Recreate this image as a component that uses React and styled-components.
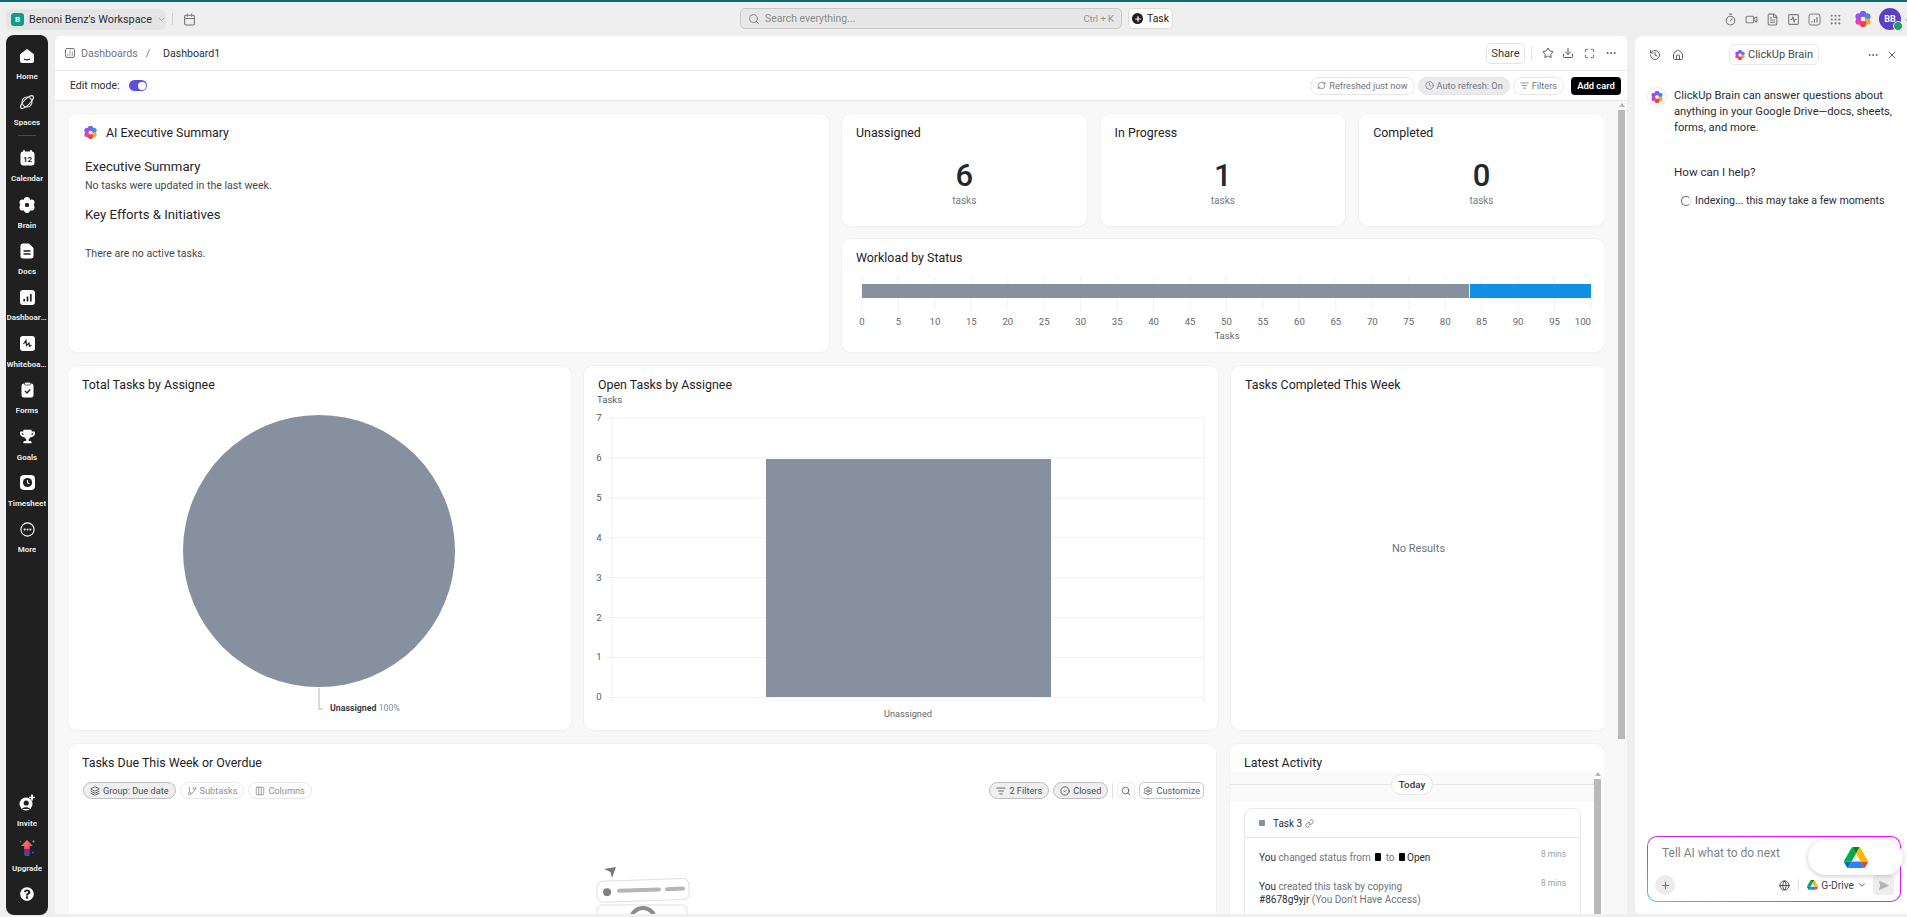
import React from 'react';
import styled, { createGlobalStyle } from 'styled-components';
import {
  Search, Calendar, ChevronDown, Timer, Video, FileText, Grip, Star, Download, Maximize, Ellipsis,
  RefreshCw, Clock, ListFilter, History, House, X, Plus, Globe, SendHorizontal, Layers, GitBranch,
  Columns3, CircleCheck, Settings, Link, ChartNoAxesColumn, SquareActivity,
} from 'lucide-react';
import { FaQuestionCircle, FaTrophy } from 'react-icons/fa';

const GlobalStyle = createGlobalStyle`
  html, body { margin: 0; padding: 0; height: 100%; overflow: hidden; }
  body { font-family: Roboto, "Noto Sans", sans-serif; background: #efefef; color: #2a2e34; }
  * { box-sizing: border-box; }
`;

const Shell = styled.div`
  height: 917px;
  display: flex;
  flex-direction: column;
  border-top: 2px solid #0e6a6e;
  overflow: hidden;
`;

/* ---------- top bar ---------- */
const TopBar = styled.header`
  height: 34px;
  flex: none;
  display: flex;
  align-items: center;
  padding: 0 0 0 6px;
  position: relative;
`;
const WorkspaceBtn = styled.div`
  width: 160px;
  height: 21px;
  background: #e5e5e5;
  border-radius: 6px;
  display: flex;
  align-items: center;
  padding-left: 5px;
  gap: 5px;
  font-size: 10.8px;
  color: #2a2e34;
  white-space: nowrap;
`;
const WorkspaceLogo = styled.span`
  width: 13px;
  height: 13px;
  flex: none;
  border-radius: 3px;
  background: #0f9d8a;
  color: #fff;
  font-size: 8px;
  font-weight: 700;
  display: flex;
  align-items: center;
  justify-content: center;
`;
const BarDivider = styled.span`
  width: 1px;
  height: 12px;
  background: #cfcfcf;
  margin: 0 10px 0 6px;
`;
const SearchBox = styled.div`
  position: absolute;
  left: 740px;
  top: 6px;
  width: 382px;
  height: 21px;
  background: #e7e7e7;
  border: 1px solid #c9c9c9;
  border-radius: 5px;
  display: flex;
  align-items: center;
  padding: 0 7px;
  gap: 5px;
  font-size: 10.4px;
  color: #8a8a8a;
`;
const SearchHint = styled.span`
  margin-left: auto;
  font-size: 9.4px;
  color: #949494;
`;
const TaskBtn = styled.div`
  position: absolute;
  left: 1128px;
  top: 6px;
  width: 45px;
  height: 21px;
  background: #fff;
  border: 1px solid #dcdcdc;
  border-radius: 5px;
  display: flex;
  align-items: center;
  justify-content: center;
  gap: 4px;
  font-size: 10.4px;
  color: #1b1b1b;
`;
const PlusDot = styled.span`
  width: 11px;
  height: 11px;
  border-radius: 50%;
  background: #202020;
  color: #fff;
  display: flex;
  align-items: center;
  justify-content: center;
`;
const TopIcons = styled.div`
  margin-left: auto;
  display: flex;
  align-items: center;
  gap: 8px;
  color: #7d7d7d;
  padding-right: 6px;
`;
const TopLogo = styled.span`
  display: flex;
  margin: 0 -3px 0 5px;
`;
const Avatar = styled.span`
  width: 22px;
  height: 22px;
  margin-left: 3px;
  border-radius: 50%;
  background: #5b3fc4;
  color: #fff;
  font-size: 9px;
  font-weight: 700;
  display: flex;
  align-items: center;
  justify-content: center;
  position: relative;
  &::after {
    content: '';
    position: absolute;
    right: -2px;
    bottom: -1px;
    width: 8px;
    height: 8px;
    border-radius: 50%;
    background: #1f9d63;
    border: 1px solid #efefef;
  }
`;
const AvatarCaret = styled.span`
  position: absolute;
  left: 24px;
  top: 8px;
  display: flex;
  color: #8a8a8a;
`;

/* ---------- frame ---------- */
const Frame = styled.div`
  flex: 1;
  min-height: 0;
  display: flex;
  padding: 0 0 3px 6px;
`;

/* ---------- left rail ---------- */
const Rail = styled.nav`
  width: 42px;
  flex: none;
  margin: -1px 7px -1px 0;
  background: #202020;
  border-radius: 8px;
  display: flex;
  flex-direction: column;
  align-items: center;
  padding: 9px 0 9px;
`;
const RailItem = styled.div`
  width: 42px;
  height: ${p => (p.$short ? '45.6px' : '46.4px')};
  flex: none;
  display: flex;
  flex-direction: column;
  align-items: center;
  color: #fff;
`;
const RailIcon = styled.span`
  height: 24px;
  display: flex;
  align-items: center;
  justify-content: center;
`;
const RailLabel = styled.span`
  max-width: 41px;
  margin-top: 2px;
  font-size: 8px;
  line-height: 13px;
  font-weight: 700;
  color: #e6e6e6;
  white-space: nowrap;
  overflow: hidden;
  text-overflow: ellipsis;
`;
const RailDivider = styled.div`
  width: 18px;
  height: 1px;
  flex: none;
  background: #4a4a4a;
  margin: 0 0 10px;
`;
const RailSpacer = styled.div`
  flex: 1;
`;

/* ---------- main panel ---------- */
const Main = styled.main`
  width: 1572px;
  flex: none;
  background: #fff;
  border-radius: 6px 6px 0 0;
  display: flex;
  flex-direction: column;
  overflow: hidden;
`;
const PageHeader = styled.div`
  height: 35px;
  flex: none;
  border-bottom: 1px solid #e8e8e8;
  display: flex;
  align-items: center;
  padding: 0 10px 0 10px;
  font-size: 10.6px;
`;
const Crumb = styled.span`
  color: ${p => (p.$current ? '#2a2e34' : '#6f7680')};
  margin-left: ${p => p.$gap || 0}px;
`;
const BoxIcon = styled.span`
  width: 10px;
  height: 10px;
  border: 1px solid #777;
  border-radius: 2px;
  color: #777;
  display: flex;
  align-items: center;
  justify-content: center;
  margin-right: 6px;
`;
const HeaderActions = styled.div`
  margin-left: auto;
  display: flex;
  align-items: center;
  color: #555;
  gap: 10px;
`;
const ShareBtn = styled.span`
  width: 39px;
  height: 21px;
  margin-right: -4px;
  border: 1px solid #e4e4e4;
  border-radius: 5px;
  display: flex;
  align-items: center;
  justify-content: center;
  font-size: 11.2px;
  color: #3a3a3a;
`;
const VRule = styled.span`
  width: 1px;
  height: ${p => p.$h || 14}px;
  background: #e3e3e3;
`;
const StarSlot = styled.span`
  display: flex;
  margin-right: -2px;
`;
const Toolbar = styled.div`
  height: 30px;
  flex: none;
  border-bottom: 1px solid #e8e8e8;
  display: flex;
  align-items: center;
  padding: 0 6px 0 15px;
  font-size: 10.5px;
`;
const Toggle = styled.span`
  width: 18px;
  height: 11px;
  border-radius: 6px;
  background: #5f4fe0;
  margin-left: 9px;
  position: relative;
  &::after {
    content: '';
    position: absolute;
    right: 1px;
    top: 1.5px;
    width: 8px;
    height: 8px;
    border-radius: 50%;
    background: #fff;
  }
`;
const ToolActions = styled.div`
  margin-left: auto;
  display: flex;
  align-items: center;
  gap: 3px;
`;
const ToolPill = styled.span`
  height: 18px;
  border-radius: 9px;
  border: 1px solid ${p => (p.$on ? '#e3e3e8' : '#e6e6e6')};
  background: ${p => (p.$on ? '#ebebee' : '#fff')};
  color: #70757c;
  font-size: 9.2px;
  padding: 0 6px;
  display: flex;
  align-items: center;
  gap: 3px;
  white-space: nowrap;
`;
const AddCard = styled.span`
  height: 18px;
  width: 50px;
  margin-left: 4px;
  border-radius: 4px;
  background: #000;
  color: #fff;
  font-size: 9.4px;
  font-weight: 600;
  display: flex;
  align-items: center;
  justify-content: center;
`;
const ContentWrap = styled.div`
  flex: 1;
  min-height: 0;
  display: flex;
  background: #f8f8f8;
`;
const Content = styled.div`
  width: 1549px;
  flex: none;
  padding: 13px 0 0 13px;
  display: flex;
  flex-direction: column;
  gap: 14px;
  overflow: hidden;
`;
const Row = styled.div`
  display: flex;
  gap: ${p => p.$gap || 13}px;
  flex: none;
  height: ${p => (p.$h ? `${p.$h}px` : 'auto')};
`;
const Card = styled.section`
  width: ${p => p.$w}px;
  flex: none;
  background: #fff;
  border-radius: 9px;
  box-shadow: 0 0 0 1px #f2f2f2, 0 1px 2px rgba(0, 0, 0, 0.05);
  position: relative;
  overflow: hidden;
`;
const CardTitle = styled.h3`
  margin: 0;
  padding: 11px 14px 0;
  font-size: 12.4px;
  line-height: 15px;
  font-weight: 400;
  color: #1f2226;
`;
const AiTitle = styled(CardTitle)`
  padding: 11px 16px 0;
  display: flex;
  align-items: center;
  gap: 9px;
`;
const SummaryBody = styled.div`
  padding: 18px 17px 0;
`;
const SummaryHeading = styled.h4`
  margin: 0;
  font-size: 13.2px;
  line-height: 18px;
  font-weight: 400;
  color: #24272b;
`;
const SummaryText = styled.p`
  margin: ${p => p.$top || 0}px 0 ${p => p.$bottom || 0}px;
  font-size: 10.6px;
  line-height: 15px;
  color: #454a52;
`;
const StatCol = styled.div`
  display: flex;
  flex-direction: column;
  gap: 13px;
  width: 762px;
  flex: none;
`;
const StatCard = styled(Card)`
  height: 112px;
  display: flex;
  flex-direction: column;
`;
const WorkloadCard = styled(Card)`
  height: 113px;
`;
const StatNumber = styled.div`
  margin-top: 17px;
  text-align: center;
  font-size: 31px;
  line-height: 38px;
  font-weight: 500;
  color: #24272b;
`;
const StatUnit = styled.div`
  text-align: center;
  font-size: 10px;
  line-height: 12px;
  color: #777d85;
`;
const Chart = styled.svg`
  display: block;
  margin-top: ${p => p.$mt || 0}px;
  font-family: Roboto, sans-serif;
`;
const ScrollTrack = styled.div`
  width: ${p => p.$w || 10}px;
  flex: none;
  display: flex;
  flex-direction: column;
  align-items: center;
  padding-top: 2px;
  margin-left: ${p => p.$ml || 0}px;
`;
const ScrollArrow = styled.span`
  width: 0;
  height: 0;
  border-left: 3px solid transparent;
  border-right: 3px solid transparent;
  border-bottom: 4px solid #b5b5b5;
`;
const ScrollThumb = styled.span`
  width: 7px;
  height: ${p => p.$h}px;
  margin-top: ${p => p.$mt || 3}px;
  background: #b9b9b9;
`;

/* ---------- chips ---------- */
const ChipBar = styled.div`
  display: flex;
  align-items: center;
  padding: 12px 12px 0 15px;
  gap: 4px;
`;
const Chip = styled.span`
  height: 17px;
  border-radius: 9px;
  border: 1px solid ${p => (p.$on ? '#bdbdbd' : '#e8e8e8')};
  background: ${p => (p.$on ? '#efefef' : '#fff')};
  color: ${p => (p.$on ? '#4b4f55' : '#8b8f95')};
  font-size: 9.2px;
  padding: 0 6px;
  display: flex;
  align-items: center;
  gap: 3px;
  white-space: nowrap;
`;
const SquareChip = styled(Chip)`
  border-radius: 5px;
  border-color: ${p => (p.$dark ? '#c9c9c9' : '#ececec')};
  color: #55595f;
  padding: 0 3px;
`;
const ChipGap = styled.span`
  margin-left: auto;
`;
const EmptyArt = styled.div`
  display: flex;
  justify-content: center;
  margin-top: 67px;
`;

/* ---------- activity ---------- */
const ActivityBody = styled.div`
  display: flex;
  padding-top: 0;
`;
const ActivityCol = styled.div`
  width: 364px;
  flex: none;
`;
const DayBar = styled.div`
  height: 30px;
  margin-top: 2px;
  background: #fafafa;
  display: flex;
  align-items: center;
  justify-content: center;
  position: relative;
  padding-bottom: 6px;
  &::before {
    content: '';
    position: absolute;
    left: 0;
    right: 0;
    top: 12px;
    height: 1px;
    background: #e6e6e6;
  }
`;
const DayPill = styled.span`
  position: relative;
  width: 42px;
  height: 21px;
  border-radius: 11px;
  background: #fff;
  border: 1px solid #e6e6e6;
  font-size: 9.8px;
  font-weight: 500;
  display: flex;
  align-items: center;
  justify-content: center;
  color: #33373c;
`;
const TaskCard = styled.div`
  margin: 6px 0 0 14px;
  width: 337px;
  height: 140px;
  border: 1px solid #e8e8e8;
  border-radius: 8px;
`;
const TaskHead = styled.div`
  height: 29px;
  border-bottom: 1px solid #e8e8e8;
  display: flex;
  align-items: center;
  padding-left: 14px;
  font-size: 10px;
  color: #2a2e34;
  gap: 8px;
`;
const TaskLink = styled.span`
  display: flex;
  margin-left: -5px;
  color: #666;
`;
const StatusSquare = styled.span`
  width: 6px;
  height: 6px;
  display: inline-block;
  background: #87909e;
  border-radius: 1px;
`;
const ActivityRow = styled.div`
  display: flex;
  justify-content: space-between;
  padding: ${p => p.$top}px 14px 0;
  font-size: 10px;
  line-height: 13px;
  color: #70757c;
`;
const ActivityDark = styled.span`
  color: #2a2e34;
`;
const BlackMark = styled.span`
  display: inline-block;
  width: 6px;
  height: 8px;
  background: #000;
  border-radius: 1px;
  margin: 0 2px;
`;
const Ago = styled.span`
  font-size: 8.4px;
  color: #9a9ea4;
  flex: none;
  margin-top: -3px;
`;
const EmptyResults = styled.div`
  height: 163px;
  display: flex;
  align-items: flex-end;
  justify-content: center;
  font-size: 11px;
  color: #6d7278;
`;

/* ---------- brain panel ---------- */
const Brain = styled.aside`
  margin-left: 8px;
  flex: 1;
  min-width: 0;
  background: #fff;
  border-radius: 8px 0 0 6px;
  display: flex;
  flex-direction: column;
  padding: 0 6px 12px 12px;
`;
const BrainHead = styled.div`
  height: 36px;
  flex: none;
  display: flex;
  align-items: center;
  color: #5a5f66;
  padding-top: 1px;
  position: relative;
`;
const BrainHeadIcons = styled.div`
  display: flex;
  gap: 11px;
  margin-left: 2px;
`;
const BrainTitle = styled.span`
  position: absolute;
  left: 82px;
  top: 8px;
  width: 90px;
  height: 21px;
  border: 1px solid #e8e8e8;
  border-radius: 5px;
  display: flex;
  align-items: center;
  justify-content: center;
  gap: 3px;
  font-size: 11px;
  color: #44484e;
`;
const BrainHeadRight = styled.div`
  margin-left: auto;
  display: flex;
  gap: 7px;
  align-items: center;
  margin-right: 3px;
`;
const Message = styled.div`
  display: flex;
  gap: 7px;
  margin-top: 15px;
`;
const LogoDisc = styled.span`
  width: 20px;
  height: 20px;
  border-radius: 50%;
  border: 1px solid #ececec;
  flex: none;
  display: flex;
  align-items: center;
  justify-content: center;
`;
const MessageText = styled.div`
  max-width: 222px;
  font-size: 11.2px;
  line-height: 16px;
  color: #2a2e34;
  margin-top: 1px;
`;
const HelpText = styled.div`
  font-size: 11.6px;
  line-height: 16px;
  margin: 28px 0 0 27px;
  color: #2a2e34;
`;
const Indexing = styled.div`
  display: flex;
  align-items: center;
  gap: 4px;
  font-size: 10.6px;
  line-height: 16px;
  margin: 13px 0 0 34px;
  color: #2a2e34;
  white-space: nowrap;
`;
const Spinner = styled.span`
  width: 10px;
  height: 10px;
  flex: none;
  border-radius: 50%;
  border: 1.5px solid #666;
  border-right-color: #ddd;
`;
const InputBox = styled.div`
  margin-top: auto;
  height: 66px;
  border: 1px solid transparent;
  border-radius: 10px;
  background: linear-gradient(#fff, #fff) padding-box,
    linear-gradient(195deg, #f0f 0%, #d01ff0 45%, #7a6cf0 70%, #45c8ee 100%) border-box;
  position: relative;
  display: flex;
  flex-direction: column;
  padding: 9px 6px 6px 7px;
`;
const InputHint = styled.div`
  font-size: 12px;
  line-height: 15px;
  color: #7e838a;
  padding-left: 7px;
`;
const InputTools = styled.div`
  margin-top: auto;
  display: flex;
  align-items: center;
  color: #3f4349;
`;
const RoundPlus = styled.span`
  width: 20px;
  height: 20px;
  border-radius: 50%;
  background: #ececec;
  color: #777;
  display: flex;
  align-items: center;
  justify-content: center;
  margin-right: auto;
`;
const DriveSelect = styled.span`
  display: flex;
  align-items: center;
  gap: 3px;
  font-size: 10.2px;
  color: #3f4349;
  margin: 0 6px 0 0;
`;
const SendBtn = styled.span`
  width: 21px;
  height: 20px;
  border-radius: 4px;
  background: #eee;
  color: #b4b4b4;
  display: flex;
  align-items: center;
  justify-content: center;
`;
const FloatPill = styled.div`
  position: absolute;
  right: -3px;
  top: 3px;
  width: 95px;
  height: 35px;
  border-radius: 18px;
  background: #fff;
  box-shadow: 0 1px 5px rgba(0, 0, 0, 0.22);
  display: flex;
  align-items: center;
  justify-content: center;
`;
const RuleGap = styled(VRule)`
  margin: 0 8px 0 8px;
`;

/* ---------- drawn icons ---------- */
function BrainLogo({ size = 12 }) {
  const petals = [
    [12, 4.5, '#7a5cf0'], [18.5, 8.2, '#3d8bf2'], [18.5, 15.8, '#f6a23a'],
    [12, 19.5, '#f0413f'], [5.5, 15.8, '#e83ea8'], [5.5, 8.2, '#9a4ff0'],
  ];
  return (
    <svg width={size} height={size} viewBox="0 0 24 24">
      {petals.map(([x, y, c]) => <circle key={c} cx={x} cy={y} r="4.8" fill={c} />)}
      <circle cx="12" cy="12" r="3.4" fill="#fff" />
    </svg>
  );
}

function DriveLogo({ size = 12 }) {
  return (
    <svg width={size} height={size * 0.893} viewBox="0 0 87.3 78">
      <path d="m6.6 66.85 3.85 6.65c.8 1.4 1.95 2.5 3.3 3.3l13.75-23.8h-27.5c0 1.55.4 3.1 1.2 4.5z" fill="#0066da" />
      <path d="m43.65 25-13.75-23.8c-1.35.8-2.5 1.9-3.3 3.3l-25.4 44a9.06 9.06 0 0 0 -1.2 4.5h27.5z" fill="#00ac47" />
      <path d="m73.55 76.8c1.35-.8 2.5-1.9 3.3-3.3l1.6-2.75 7.65-13.25c.8-1.4 1.2-2.95 1.2-4.5h-27.502l5.852 11.5z" fill="#ea4335" />
      <path d="m43.65 25 13.75-23.8c-1.35-.8-2.9-1.2-4.5-1.2h-18.5c-1.6 0-3.15.45-4.5 1.2z" fill="#00832d" />
      <path d="m59.8 53h-32.3l-13.75 23.8c1.35.8 2.9 1.2 4.5 1.2h50.8c1.6 0 3.15-.45 4.5-1.2z" fill="#2684fc" />
      <path d="m73.4 26.5-12.7-22c-.8-1.4-1.95-2.5-3.3-3.3l-13.75 23.8 16.15 28h27.45c0-1.55-.4-3.1-1.2-4.5z" fill="#ffba00" />
    </svg>
  );
}

function SquareBars() {
  return (
    <svg width="13" height="13" viewBox="0 0 13 13" fill="none" stroke="currentColor">
      <rect x="1" y="1" width="11" height="11" rx="2" />
      <path d="M4 9.5V8M6.5 9.5V6M9 9.5V4" strokeWidth="1.2" />
    </svg>
  );
}

const Dark = '#202020';

const railIcons = {
  home: (
    <svg width="16" height="16" viewBox="0 0 16 16">
      <path d="M8 1 15 6.2V13a2 2 0 0 1-2 2H3a2 2 0 0 1-2-2V6.2z" fill="#fff" />
      <path d="M5.5 11.2c1.4.8 3.6.8 5 0" stroke={Dark} strokeWidth="1.2" fill="none" strokeLinecap="round" />
    </svg>
  ),
  spaces: (
    <svg width="18" height="18" viewBox="0 0 18 18" fill="none" stroke="#e8e8e8" strokeWidth="1.1">
      <circle cx="9" cy="9" r="5" />
      <ellipse cx="9" cy="9" rx="8.5" ry="3" transform="rotate(-45 9 9)" />
    </svg>
  ),
  calendar: (
    <svg width="15" height="16" viewBox="0 0 15 16">
      <rect x="0.5" y="1.5" width="14" height="14" rx="3" fill="#fff" />
      <rect x="3" y="0" width="2" height="3" rx="1" fill="#fff" />
      <rect x="10" y="0" width="2" height="3" rx="1" fill="#fff" />
      <text x="7.5" y="12" textAnchor="middle" fontSize="8" fontWeight="700" fill={Dark} fontFamily="Roboto">12</text>
    </svg>
  ),
  brain: (
    <svg width="16" height="16" viewBox="0 0 16 16">
      {[[8, 3.2], [12.4, 5.6], [12.4, 10.4], [8, 12.8], [3.6, 10.4], [3.6, 5.6]].map(([x, y]) => (
        <circle key={`${x}${y}`} cx={x} cy={y} r="3.1" fill="#fff" />
      ))}
      <circle cx="8" cy="8" r="1.9" fill={Dark} />
    </svg>
  ),
  docs: (
    <svg width="14" height="16" viewBox="0 0 14 16">
      <path d="M3 .5h6l4.5 4.5v8a2.5 2.5 0 0 1-2.5 2.5H3A2.5 2.5 0 0 1 .5 13V3A2.5 2.5 0 0 1 3 .5z" fill="#fff" />
      <path d="M3.5 8h7M3.5 11h7" stroke={Dark} strokeWidth="1.3" />
    </svg>
  ),
  dashboards: (
    <svg width="15" height="15" viewBox="0 0 15 15">
      <rect width="15" height="15" rx="3" fill="#fff" />
      <path d="M4.2 11.5V9M7.5 11.5V6.5M10.8 11.5V4" stroke={Dark} strokeWidth="1.7" />
    </svg>
  ),
  whiteboards: (
    <svg width="15" height="15" viewBox="0 0 15 15">
      <rect width="15" height="15" rx="3" fill="#fff" />
      <path d="M3.5 8 6 4.5 6.5 9.5 9 7l.5 3.2 2-1.2" stroke={Dark} strokeWidth="1.2" fill="none" />
    </svg>
  ),
  forms: (
    <svg width="13" height="16" viewBox="0 0 13 16">
      <rect x="0.5" y="1.5" width="12" height="14" rx="2.5" fill="#fff" />
      <rect x="3.5" y="0.2" width="6" height="2.8" rx="1" fill="#fff" stroke={Dark} strokeWidth="0.7" />
      <path d="m4 9 2 2 3.2-3.4" stroke={Dark} strokeWidth="1.4" fill="none" />
    </svg>
  ),
  goals: <FaTrophy size={15} color="#fff" />,
  timesheet: (
    <svg width="15" height="15" viewBox="0 0 15 15">
      <rect width="15" height="15" rx="4" fill="#fff" />
      <circle cx="7.5" cy="7.5" r="4.6" fill={Dark} />
      <path d="M7.5 5v2.8l1.8 1" stroke="#fff" strokeWidth="1.1" fill="none" />
    </svg>
  ),
  more: (
    <svg width="15" height="15" viewBox="0 0 15 15">
      <circle cx="7.5" cy="7.5" r="6.6" stroke="#fff" strokeWidth="1.1" fill="none" />
      <circle cx="4.6" cy="7.5" r="1" fill="#fff" />
      <circle cx="7.5" cy="7.5" r="1" fill="#fff" />
      <circle cx="10.4" cy="7.5" r="1" fill="#fff" />
    </svg>
  ),
  invite: (
    <svg width="16" height="17" viewBox="0 0 16 17">
      <circle cx="7" cy="10" r="6.5" fill="#fff" />
      <circle cx="7.2" cy="9" r="2.6" fill={Dark} />
      <path d="M3 15c1-2.4 7-2.4 8.4 0z" fill={Dark} />
      <path d="M13 .5v6M10 3.5h6" stroke="#fff" strokeWidth="1.7" />
    </svg>
  ),
  upgrade: (
    <svg width="16" height="17" viewBox="0 0 16 17">
      <defs>
        <linearGradient id="upg" x1="0" y1="0" x2="1" y2="1">
          <stop offset="0" stopColor="#fa9a2b" />
          <stop offset="1" stopColor="#f0269a" />
        </linearGradient>
      </defs>
      <path d="M8 0 14 6h-3.2v3.5H5.2V6H2z" fill="url(#upg)" />
      <path d="M5.2 11h5.6" stroke="#f0269a" strokeWidth="1.2" />
      <path d="M5.2 13h5.6" stroke="#7a5cf0" strokeWidth="1.2" />
      <path d="M5.6 15h4.8" stroke="#4f7cf0" strokeWidth="1.2" />
      <circle cx="1.5" cy="1.5" r=".8" fill="#e83ea8" />
      <circle cx="14.5" cy="1.5" r=".9" fill="#f6a23a" />
      <circle cx="14" cy="12.5" r="1" fill="#7a3cf0" />
    </svg>
  ),
};

const railTop = [
  ['home', 'Home', true],
  ['spaces', 'Spaces', true],
];
const railMain = [
  ['calendar', 'Calendar'], ['brain', 'Brain'], ['docs', 'Docs'], ['dashboards', 'Dashboards'],
  ['whiteboards', 'Whiteboards'], ['forms', 'Forms'], ['goals', 'Goals'], ['timesheet', 'Timesheet'], ['more', 'More'],
];

function RailEntry({ icon, label, short }) {
  return (
    <RailItem $short={short}>
      <RailIcon>{railIcons[icon]}</RailIcon>
      <RailLabel>{label}</RailLabel>
    </RailItem>
  );
}

/* ---------- charts ---------- */
const GREY = '#87909e';

function PieChart() {
  return (
    <Chart $mt={8} width="503" height="330" viewBox="0 0 503 330">
      <circle cx="251" cy="151" r="136" fill={GREY} />
      <path d="M251 288v21h4" stroke="#b6b6b6" fill="none" />
      <text x="262" y="311" fontSize="8.8" fill="#3a3e44">
        <tspan fontWeight="700">Unassigned</tspan>
        <tspan fill="#8a8f96"> 100%</tspan>
      </text>
    </Chart>
  );
}

function BarChart() {
  const ticks = [7, 6, 5, 4, 3, 2, 1, 0];
  return (
    <Chart width="634" height="338" viewBox="0 -4 634 338">
      <text x="13" y="7" fontSize="9.6" fill="#55595f">Tasks</text>
      {ticks.map((t, i) => {
        const y = 22 + i * 39.9;
        return (
          <g key={t}>
            <line x1="22" x2="620" y1={y} y2={y} stroke="#f0f0f0" />
            <text x="15" y={y + 3} fontSize="9.6" fill="#55595f" textAnchor="middle">{t}</text>
          </g>
        );
      })}
      <line x1="28" x2="28" y1="22" y2="307" stroke="#f0f0f0" />
      <line x1="620" x2="620" y1="22" y2="307" stroke="#f0f0f0" />
      <rect x="182" y="63" width="285" height="238" fill={GREY} />
      <text x="324" y="321" fontSize="9.2" fill="#63686f" textAnchor="middle">Unassigned</text>
    </Chart>
  );
}

function WorkloadChart() {
  const ticks = Array.from({ length: 21 }, (_, i) => i * 5);
  return (
    <Chart $mt={7} width="762" height="80" viewBox="0 0 762 80">
      {ticks.map(t => {
        const x = 20 + 7.29 * t;
        return (
          <g key={t}>
            <line x1={x} x2={x} y1="5" y2="38" stroke="#f0f0f0" />
            <text x={x} y="53" fontSize="9.6" fill="#63686f" textAnchor={t === 100 ? 'end' : 'middle'}>{t}</text>
          </g>
        );
      })}
      <rect x="20" y="12" width="607" height="14" fill={GREY} />
      <rect x="628" y="12" width="121" height="14" fill="#1090e0" />
      <text x="385" y="67" fontSize="9.6" fill="#63686f" textAnchor="middle">Tasks</text>
    </Chart>
  );
}

function EmptyIllustration() {
  return (
    <svg width="110" height="50" viewBox="0 0 110 50">
      <path d="M17 3 29 1 25 12 23.5 6z" fill="#777" />
      <g transform="rotate(-2 55 24)">
        <rect x="10" y="14" width="92" height="21" rx="6" fill="#fff" stroke="#dfdfdf" />
        <circle cx="20" cy="25" r="4" fill="#808080" />
        <rect x="30" y="22" width="44" height="4" rx="2" fill="#b5b5b5" />
        <rect x="78" y="22" width="20" height="4" rx="2" fill="#b5b5b5" />
      </g>
      <rect x="10" y="39" width="90" height="20" rx="5" fill="#fff" stroke="#dfdfdf" />
      <circle cx="56" cy="54" r="12" fill="#fff" stroke="#8c8c8c" strokeWidth="4" />
    </svg>
  );
}

const statCards = [['Unassigned', 6], ['In Progress', 1], ['Completed', 0]];

export default function App() {
  return (
    <>
      <GlobalStyle />
      <Shell>
        <TopBar>
          <WorkspaceBtn>
            <WorkspaceLogo>B</WorkspaceLogo>
            Benoni Benz's Workspace
            <ChevronDown size={11} color="#888" />
          </WorkspaceBtn>
          <BarDivider />
          <Calendar size={13} color="#777" />
          <SearchBox>
            <Search size={12} color="#888" />
            Search everything...
            <SearchHint>Ctrl + K</SearchHint>
          </SearchBox>
          <TaskBtn>
            <PlusDot><Plus size={8} strokeWidth={3.5} /></PlusDot>
            Task
          </TaskBtn>
          <TopIcons>
            <Timer size={13} />
            <Video size={13} />
            <FileText size={13} />
            <SquareActivity size={13} />
            <SquareBars />
            <Grip size={13} />
            <TopLogo><BrainLogo size={16} /></TopLogo>
            <Avatar>
              BB
              <AvatarCaret><ChevronDown size={8} /></AvatarCaret>
            </Avatar>
          </TopIcons>
        </TopBar>

        <Frame>
          <Rail>
            {railTop.map(([i, l, s]) => <RailEntry key={i} icon={i} label={l} short={s} />)}
            <RailDivider />
            {railMain.map(([i, l]) => <RailEntry key={i} icon={i} label={l} />)}
            <RailSpacer />
            <RailEntry icon="invite" label="Invite" short />
            <RailEntry icon="upgrade" label="Upgrade" short />
            <RailIcon><FaQuestionCircle size={14} color="#fff" /></RailIcon>
          </Rail>

          <Main>
            <PageHeader>
              <BoxIcon><ChartNoAxesColumn size={8} /></BoxIcon>
              <Crumb>Dashboards</Crumb>
              <Crumb $gap={8}>/</Crumb>
              <Crumb $current $gap={13}>Dashboard1</Crumb>
              <HeaderActions>
                <ShareBtn>Share</ShareBtn>
                <VRule />
                <StarSlot><Star size={12} /></StarSlot>
                <Download size={12} />
                <Maximize size={11} />
                <Ellipsis size={12} />
              </HeaderActions>
            </PageHeader>
            <Toolbar>
              Edit mode:
              <Toggle />
              <ToolActions>
                <ToolPill><RefreshCw size={9} />Refreshed just now</ToolPill>
                <ToolPill $on><Clock size={9} />Auto refresh: On</ToolPill>
                <ToolPill><ListFilter size={9} />Filters</ToolPill>
                <AddCard>Add card</AddCard>
              </ToolActions>
            </Toolbar>
            <ContentWrap>
              <Content>
                <Row $h={238}>
                  <Card $w={761}>
                    <AiTitle><BrainLogo size={13} />AI Executive Summary</AiTitle>
                    <SummaryBody>
                      <SummaryHeading>Executive Summary</SummaryHeading>
                      <SummaryText $top={2} $bottom={13}>No tasks were updated in the last week.</SummaryText>
                      <SummaryHeading>Key Efforts &amp; Initiatives</SummaryHeading>
                      <SummaryText $top={22}>There are no active tasks.</SummaryText>
                    </SummaryBody>
                  </Card>
                  <StatCol>
                    <Row $h={112} $gap={14}>
                      {statCards.map(([t, n]) => (
                        <StatCard key={t} $w={244.6}>
                          <CardTitle>{t}</CardTitle>
                          <StatNumber>{n}</StatNumber>
                          <StatUnit>tasks</StatUnit>
                        </StatCard>
                      ))}
                    </Row>
                    <WorkloadCard $w={762}>
                      <CardTitle>Workload by Status</CardTitle>
                      <WorkloadChart />
                    </WorkloadCard>
                  </StatCol>
                </Row>

                <Row $h={364}>
                  <Card $w={503}>
                    <CardTitle>Total Tasks by Assignee</CardTitle>
                    <PieChart />
                  </Card>
                  <Card $w={634}>
                    <CardTitle>Open Tasks by Assignee</CardTitle>
                    <BarChart />
                  </Card>
                  <Card $w={375}>
                    <CardTitle>Tasks Completed This Week</CardTitle>
                    <EmptyResults>No Results</EmptyResults>
                  </Card>
                </Row>

                <Row $h={200} $gap={14}>
                  <Card $w={1148}>
                    <CardTitle>Tasks Due This Week or Overdue</CardTitle>
                    <ChipBar>
                      <Chip $on><Layers size={10} />Group: Due date</Chip>
                      <Chip><GitBranch size={10} />Subtasks</Chip>
                      <Chip><Columns3 size={10} />Columns</Chip>
                      <ChipGap />
                      <Chip $on><ListFilter size={10} />2 Filters</Chip>
                      <Chip $on><CircleCheck size={10} />Closed</Chip>
                      <VRule $h={16} />
                      <SquareChip><Search size={10} /></SquareChip>
                      <SquareChip $dark><Settings size={10} />Customize</SquareChip>
                    </ChipBar>
                    <EmptyArt><EmptyIllustration /></EmptyArt>
                  </Card>
                  <Card $w={374}>
                    <CardTitle>Latest Activity</CardTitle>
                    <ActivityBody>
                      <ActivityCol>
                        <DayBar><DayPill>Today</DayPill></DayBar>
                        <TaskCard>
                          <TaskHead>
                            <StatusSquare />
                            Task 3
                            <TaskLink><Link size={9} /></TaskLink>
                          </TaskHead>
                          <ActivityRow $top={13}>
                            <span>
                              <ActivityDark>You</ActivityDark> changed status from <BlackMark /> to <BlackMark /><ActivityDark>Open</ActivityDark>
                            </span>
                            <Ago>8 mins</Ago>
                          </ActivityRow>
                          <ActivityRow $top={16}>
                            <span>
                              <ActivityDark>You</ActivityDark> created this task by copying<br />
                              <ActivityDark>#8678g9yjr</ActivityDark> (You Don't Have Access)
                            </span>
                            <Ago>8 mins</Ago>
                          </ActivityRow>
                        </TaskCard>
                      </ActivityCol>
                      <ScrollTrack $w={7}>
                        <ScrollArrow />
                        <ScrollThumb $h={140} />
                      </ScrollTrack>
                    </ActivityBody>
                  </Card>
                </Row>
              </Content>
              <ScrollTrack $w={9} $ml={13}>
                <ScrollArrow />
                <ScrollThumb $h={629} />
              </ScrollTrack>
            </ContentWrap>
          </Main>

          <Brain>
            <BrainHead>
              <BrainHeadIcons>
                <History size={12} />
                <House size={12} />
              </BrainHeadIcons>
              <BrainTitle><BrainLogo size={10} />ClickUp Brain</BrainTitle>
              <BrainHeadRight>
                <Ellipsis size={12} />
                <X size={12} />
              </BrainHeadRight>
            </BrainHead>
            <Message>
              <LogoDisc><BrainLogo size={12} /></LogoDisc>
              <MessageText>
                ClickUp Brain can answer questions about anything in your Google Drive—docs, sheets, forms, and more.
              </MessageText>
            </Message>
            <HelpText>How can I help?</HelpText>
            <Indexing><Spinner />Indexing... this may take a few moments</Indexing>
            <InputBox>
              <InputHint>Tell AI what to do next</InputHint>
              <InputTools>
                <RoundPlus><Plus size={11} strokeWidth={2.5} /></RoundPlus>
                <Globe size={11} />
                <RuleGap $h={12} />
                <DriveSelect><DriveLogo size={11} />G-Drive<ChevronDown size={10} /></DriveSelect>
                <SendBtn><SendHorizontal size={11} fill="#b4b4b4" /></SendBtn>
              </InputTools>
              <FloatPill><DriveLogo size={24} /></FloatPill>
            </InputBox>
          </Brain>
        </Frame>
      </Shell>
    </>
  );
}
